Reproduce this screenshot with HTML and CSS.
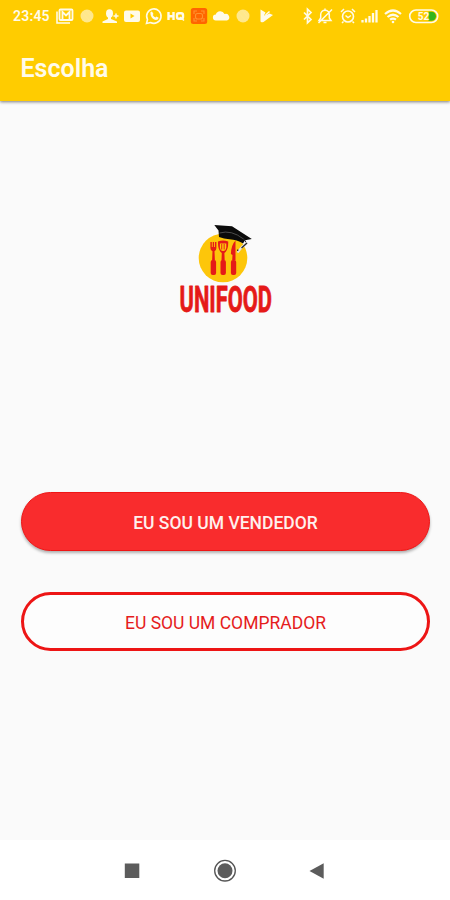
FILE: index.html
```html
<!DOCTYPE html>
<html lang="pt-BR">
<head>
<meta charset="utf-8">
<meta name="viewport" content="width=device-width, initial-scale=1">
<title>Escolha</title>
<link rel="stylesheet" href="styles.css">
</head>
<body>
<div class="screen">
  <header class="header">
    <div class="status">
      <span class="clock">23:45</span>
      <div class="notifications">
        <svg viewBox="0 0 20 20"><path d="M2 5.500V17H15" fill="none" stroke="currentColor" stroke-width="1.600"/><rect x="4.500" y="3.500" width="13" height="10.500" rx="1" fill="none" stroke="currentColor" stroke-width="1.800"/><path d="M7.500 13V6L11 9.500 14.500 6v7" fill="none" stroke="currentColor" stroke-width="1.800"/></svg>
        <svg viewBox="0 0 20 20" class="faded"><circle cx="10" cy="10" r="6.500"/><path d="M5 6l8 9M9 4l6 8" stroke="#fff" stroke-width=".6"/></svg>
        <svg viewBox="0 0 20 20"><ellipse cx="9.500" cy="7.500" rx="3.500" ry="4.200"/><path d="M8 10h3v3l6 2.500V17H2.500v-1.500L8 13z"/><path d="M16 7.500v5M13.500 10h5" stroke="currentColor" stroke-width="1.500"/></svg>
        <svg viewBox="0 0 20 20"><path fill-rule="evenodd" d="M4 4.500h12q2 0 2 2v7.500q0 2-2 2H4q-2 0-2-2V6.500q0-2 2-2zM8.500 7.500v5l4-2.500z"/></svg>
        <svg viewBox="0 0 20 20"><path d="M2.500 17.500l1-4a7.200 7.200 0 1 1 3 3z" fill="none" stroke="currentColor" stroke-width="1.600"/><path d="M6.500 6l1.500-.5 1.500 2.500-.8 1q1 1.800 2.700 2.500l1-1 2.300 1.300q-.5 2.200-2.700 2.200C9 14 5.800 10 6.500 6z"/></svg>
        <svg viewBox="0 0 20 20"><path d="M2.500 6v8M7.500 6v8M2.500 10.200h5" fill="none" stroke="currentColor" stroke-width="2.400"/><rect x="11" y="7.200" width="6" height="5.600" rx="1.800" fill="none" stroke="currentColor" stroke-width="2.400"/><path d="M14 11l4 3.500" stroke="currentColor" stroke-width="1.600"/></svg>
        <svg viewBox="0 0 20 20"><rect x="1.800" y="2" width="16.400" height="16" rx="2.500" fill="#ff6500"/><g fill="none" stroke="#ff9430" stroke-width="1.100"><path d="M5 8V5h3M12 5h3v3M5 12v3h3M12 15h3v-3"/><rect x="6.500" y="7.500" width="7" height="5.500" rx="2"/></g></svg>
        <svg viewBox="0 0 20 20"><path d="M5 14.500a3 3 0 0 1-.2-6A4.700 4.700 0 0 1 13.500 8a3.300 3.300 0 0 1 2.500 6.500z"/></svg>
        <svg viewBox="0 0 20 20" class="faded"><circle cx="10" cy="10" r="6.500"/><path d="M5 6l8 9M9 4l6 8" stroke="#fff" stroke-width=".6"/></svg>
        <svg viewBox="0 0 20 20"><path d="M4.500 3.500l5 3-1.500 3 3.500-1 2-1 3.500 1.500-9.500 7q-3 1-3-1z"/><path d="M9.500 9l4-3.500" stroke="currentColor" stroke-width="1.500"/></svg>
      </div>
      <div class="system">
        <svg class="bluetooth" viewBox="0 0 12 20"><path d="M2 6.500l7 7-3.500 3.300V3.200L9 6.500l-7 7" fill="none" stroke="currentColor" stroke-width="1.700"/></svg>
        <svg viewBox="0 0 20 20"><path d="M4 14.500h12l-1.700-2.500V8.500a4.300 4.300 0 0 0-8.600 0V12zM8.500 16.500h3M10 2.500v1.500M3.500 17L17 3.500" fill="none" stroke="currentColor" stroke-width="1.500"/></svg>
        <svg viewBox="0 0 20 20"><circle cx="10" cy="10.500" r="5.500" fill="none" stroke="currentColor" stroke-width="1.600"/><path d="M7.500 9.500L10 11.500l3-2M3 6l3-3M14 3l3 3M5.500 15.500L4 17M14.500 15.500L16 17" fill="none" stroke="currentColor" stroke-width="1.500"/></svg>
        <svg viewBox="0 0 20 20"><path d="M2.500 14v2.500M6 12.500v4M9.500 10v6.500M13 7v9.500M16.500 4v12.500" stroke="currentColor" stroke-width="2.300"/></svg>
        <svg viewBox="0 0 20 20"><path d="M2 8q8-7 16 0M4.500 11q5.500-4.500 11 0M7 13.700q3-2.200 6 0" fill="none" stroke="currentColor" stroke-width="2.200"/><circle cx="10" cy="16" r="1.300"/></svg>
        <svg class="battery" viewBox="0 0 32 20"><rect x="1.700" y="4" width="28" height="12.500" rx="6.250" fill="none" stroke="currentColor" stroke-width="1.600"/><path d="M20.500 5.700h3a4.500 4.500 0 0 1 0 9h-3z" fill="#35b51c"/><text x="15.500" y="14" text-anchor="middle" class="charge">52</text></svg>
      </div>
    </div>
    <h1 class="title">Escolha</h1>
  </header>

  <main class="content">
    <svg class="logo" viewBox="0 0 100 100" role="img" aria-label="Unifood">
      <circle cx="47" cy="36" r="24.300" fill="#fdc60a"/>
      <g fill="#e51a18">
        <path d="M34.400 20h1.400v5h.9v-5h1.400v5h.9v-5h1.400v6q0 2.500-1.900 3.200l.4 9.300h-2.800l.4-9.300q-2.100-.7-2.100-3.200z"/>
        <rect x="34.700" y="38" width="5.400" height="15" rx="2"/>
        <path fill-rule="evenodd" d="M42 19.500q5-2 10.200 0 .3 7.500-2.600 10.500l-1.200 1 .3 7.500h-3.200l.3-7.500-1.200-1Q41.700 27 42 19.500zM43.900 21.500v4q.5 3.500 3.200 3.500t3.200-3.500v-4z"/>
        <path d="M45.300 22h.9v5.500h-.9zM47.700 22h.9v5.500h-.9z"/>
        <rect x="44.500" y="38" width="5.400" height="15" rx="2"/>
        <path d="M59.500 18.500V38h-3.300l.3-5-1.600-1q.2-9 4.600-13.500z"/>
        <rect x="54.900" y="38" width="5.300" height="15" rx="2"/>
      </g>
      <path d="M38.300 3l17.700 1.300L75.800 17l-6.800 1.200-2 3.200q-6-3.700-13.500-4.200-5.500-.3-10.500-2.200l-.5-6.500z" fill="#0b0b0b"/>
      <path d="M43.500 11q12-3.500 24 6" fill="none" stroke="#777" stroke-width=".6"/>
      <path d="M67 16l4 5.500" fill="none" stroke="#252525" stroke-width="1"/>
      <path d="M71.500 20.500q-6 4-10 10" fill="none" stroke="#e4e4e4" stroke-width="2.200"/>
      <path d="M71 21l-5.500 5M61.500 29l.5-1.500" stroke="#252525" stroke-width="1.200"/>
      <text class="wordmark" x="3.500" y="89.600" textLength="92.500" lengthAdjust="spacingAndGlyphs">UNIFOOD</text>
    </svg>
    <div class="actions">
      <button class="button filled">EU SOU UM VENDEDOR</button>
      <button class="button outlined">EU SOU UM COMPRADOR</button>
    </div>
  </main>

  <nav class="navbar">
    <svg viewBox="0 0 24 24"><rect x="4.800" y="4.500" width="14.500" height="14.500" fill="#5c5c5c"/></svg>
    <svg viewBox="0 0 24 24"><circle cx="12" cy="11.700" r="10.300" fill="none" stroke="#555" stroke-width="1.300"/><circle cx="12" cy="11.700" r="7.500" fill="#5c5c5c"/></svg>
    <svg viewBox="0 0 24 24"><path d="M3.500 12L17.700 4.300v15.400z" fill="#5c5c5c"/></svg>
  </nav>
</div>
</body>
</html>
```
FILE: styles.css
```css
* { box-sizing: border-box; }

body {
  margin: 0;
  background: #fafafa;
  font-family: Roboto, sans-serif;
}

.screen {
  display: flex;
  flex-direction: column;
  width: 450px;
  height: 900px;
}

.header {
  flex: none;
  height: 101px;
  background: #fc0;
  color: #fffbe9;
  box-shadow: 0 1px 3px rgba(0, 0, 0, .5);
}

.status {
  display: flex;
  align-items: center;
  height: 32px;
  padding: 0 10px 0 13px;
}

.status svg {
  display: block;
  flex: none;
  width: 20px;
  height: 20px;
  fill: currentColor;
}

.clock {
  width: 42px;
  font-size: 14px;
  font-weight: 600;
  letter-spacing: .2px;
}

.notifications {
  display: flex;
  gap: 2.300px;
}

.status .faded { opacity: .6; }

.system {
  display: flex;
  gap: 2.800px;
  margin-left: auto;
}

.status .bluetooth {
  width: 12px;
  margin-right: -1.500px;
}

.status .battery {
  width: 32px;
  margin-left: 2px;
}

.charge {
  font-size: 10px;
  font-weight: 700;
}

.title {
  display: flex;
  align-items: center;
  height: 72px;
  margin: 0;
  padding-left: 20.500px;
  font-size: 25px;
  font-weight: 600;
}

.content {
  display: flex;
  flex: 1;
  flex-direction: column;
  align-items: center;
  padding: 121px 20px 0 21px;
}

.logo {
  width: 100px;
  height: 100px;
  overflow: visible;
}

.wordmark {
  font-size: 36px;
  font-weight: 700;
  fill: #e51a18;
  stroke: #e51a18;
  stroke-width: .8px;
  stroke-linejoin: round;
}

.actions {
  display: flex;
  flex-direction: column;
  gap: 41px;
  width: 100%;
  margin-top: 170px;
}

.button {
  height: 59px;
  padding: 2px 0 0;
  border-radius: 30px;
  font-family: inherit;
  font-size: 17.500px;
}

.filled {
  border: 1px solid #ef1515;
  background: #f92c2d;
  color: #fff0ee;
  font-weight: 500;
  box-shadow: 0 2px 3px rgba(0, 0, 0, .3);
}

.outlined {
  border: 3px solid #ed1515;
  background: #fdfdfd;
  color: #e51c1c;
  font-weight: 400;
}

.navbar {
  display: flex;
  flex: none;
  justify-content: center;
  gap: 69px;
  height: 60px;
  padding-top: 19px;
  background: #fff;
}

.navbar svg {
  width: 24px;
  height: 24px;
}
```
